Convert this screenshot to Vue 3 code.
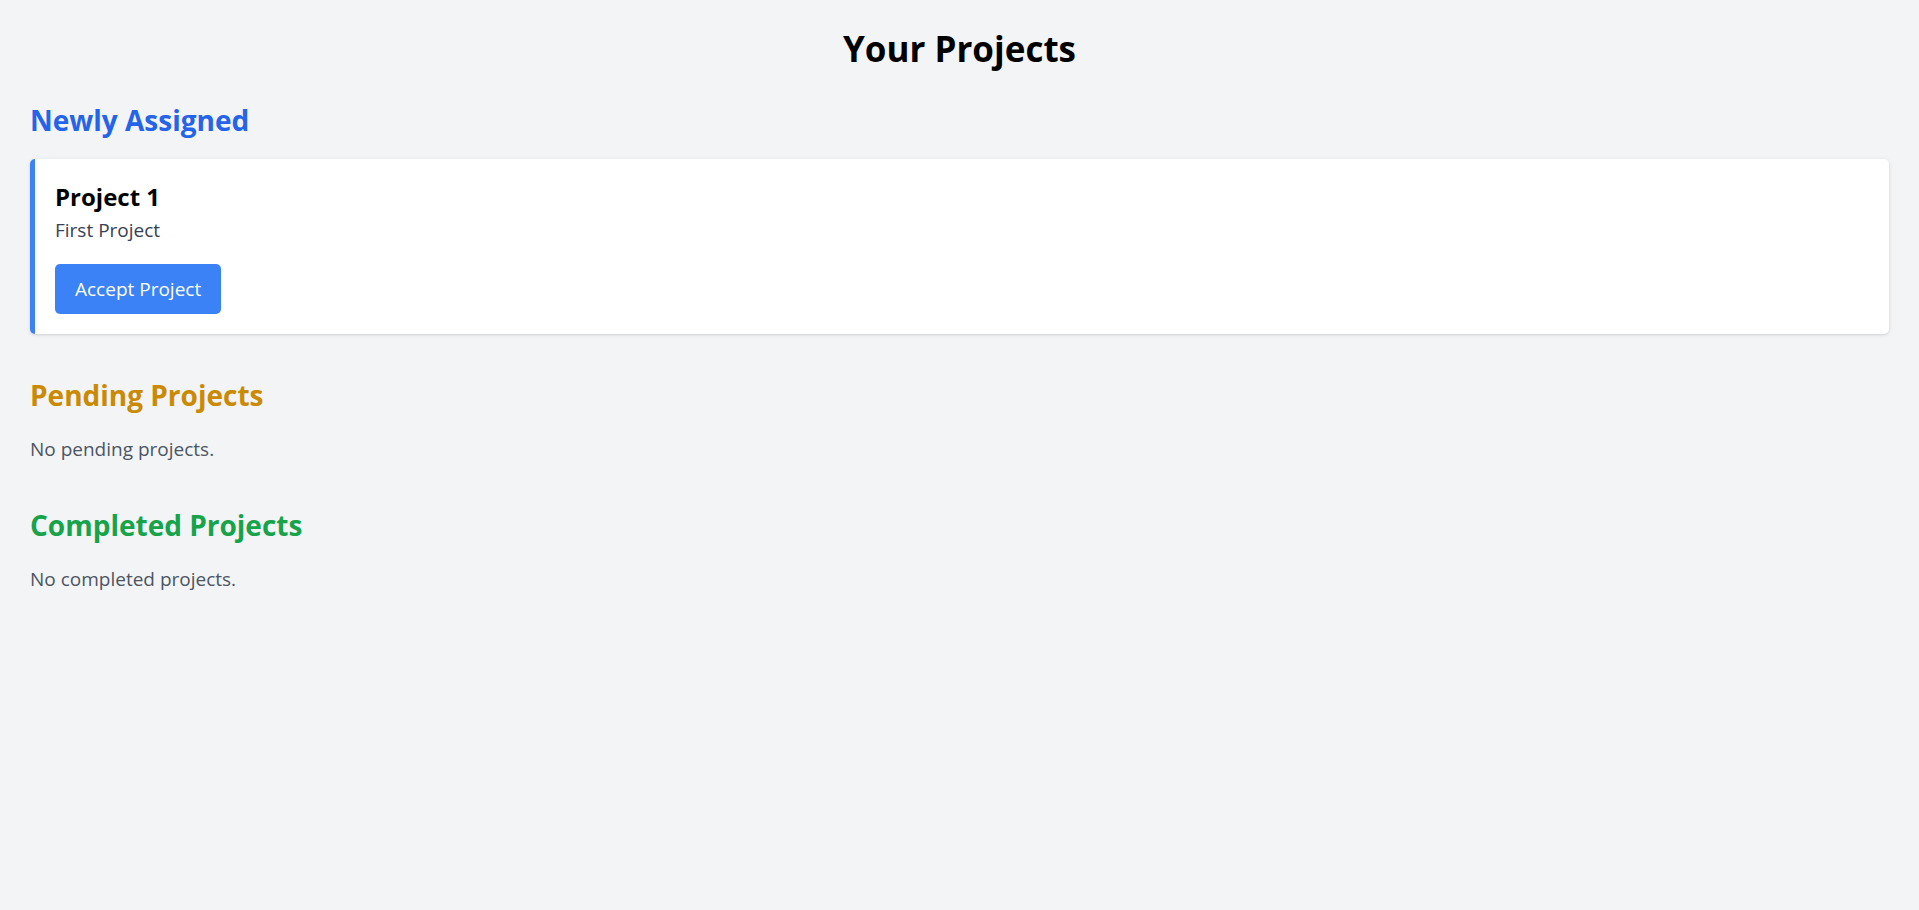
<script setup>
import { ref } from 'vue'

const sections = ref([
  {
    key: 'assigned',
    title: 'Newly Assigned',
    empty: 'No new projects.',
    projects: [{ id: 1, name: 'Project 1', description: 'First Project' }],
  },
  { key: 'pending', title: 'Pending Projects', empty: 'No pending projects.', projects: [] },
  { key: 'completed', title: 'Completed Projects', empty: 'No completed projects.', projects: [] },
])
</script>

<template>
  <main class="page">
    <h1 class="page-title">Your Projects</h1>
    <section v-for="section in sections" :key="section.key" class="section">
      <h2 class="section-title" :class="section.key">{{ section.title }}</h2>
      <article v-for="project in section.projects" :key="project.id" class="card">
        <h3 class="card-title">{{ project.name }}</h3>
        <p class="card-text">{{ project.description }}</p>
        <button type="button" class="accept">Accept Project</button>
      </article>
      <p v-if="!section.projects.length" class="empty">{{ section.empty }}</p>
    </section>
  </main>
</template>

<style>
body {
  margin: 0;
  background: #f3f4f6;
}
</style>

<style scoped>
.page {
  box-sizing: border-box;
  min-height: 100vh;
  padding: 26px 30px;
  background: #f3f4f6;
  color: #000;
  font-family: "Segoe UI", "Open Sans", "Noto Sans", sans-serif;
  font-size: 19px;
  line-height: 30px;
}

h1,
h2,
h3,
p {
  margin: 0;
}

.page-title {
  margin-bottom: 28px;
  font-size: 35px;
  font-weight: 700;
  line-height: 45px;
  text-align: center;
}

.section {
  margin-bottom: 40px;
}

.section-title {
  margin-bottom: 18px;
  font-size: 28px;
  font-weight: 700;
  line-height: 42px;
}

.assigned {
  color: #2563eb;
}

.pending {
  color: #ca8a04;
}

.completed {
  color: #16a34a;
}

.card {
  padding: 20px;
  border-left: 5px solid #3b82f6;
  border-radius: 5px;
  background: #fff;
  box-shadow: 0 1px 4px rgba(0, 0, 0, 0.1), 0 1px 2px rgba(0, 0, 0, 0.06);
}

.card-title {
  font-size: 24px;
  font-weight: 700;
  line-height: 36px;
}

.card-text {
  color: #374151;
}

.accept {
  display: block;
  margin-top: 19px;
  padding: 10px 20px;
  border: 0;
  border-radius: 5px;
  background: #3b82f6;
  color: #fff;
  font: inherit;
  cursor: pointer;
}

.empty {
  color: #4b5563;
}
</style>
